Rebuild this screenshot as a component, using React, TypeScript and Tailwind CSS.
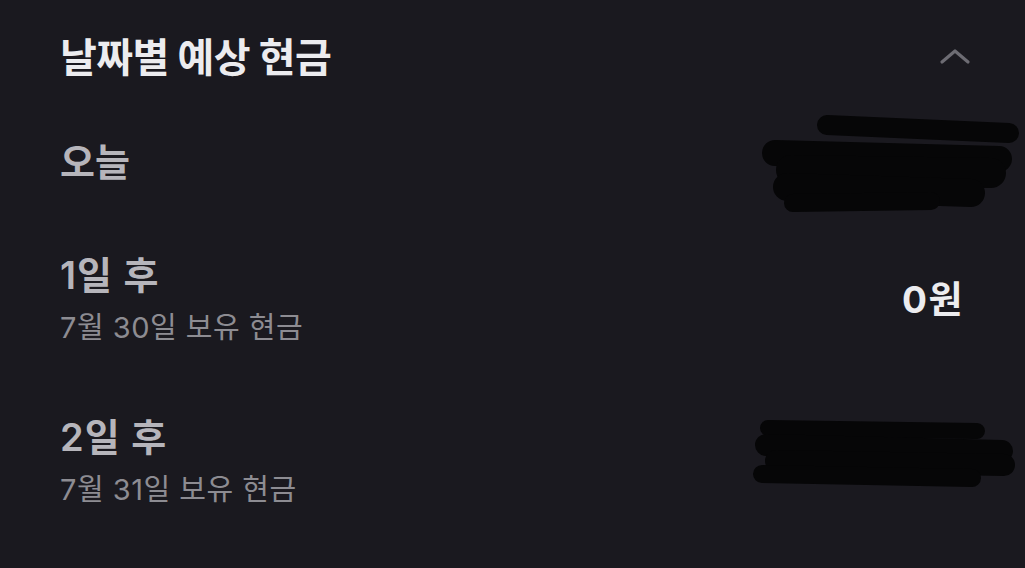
import React from "react";

const font = { fontFamily: '"Noto Sans CJK KR", "Noto Sans", sans-serif' };
const mixed = { fontFamily: 'Inter, "Noto Sans CJK KR", sans-serif' };

function Scribble({ lines, className }: { lines: number[][]; className: string }) {
  return (
    <svg className={className} fill="none" aria-hidden>
      {lines.map(([x1, y1, x2, y2, w], i) => (
        <line
          key={i}
          x1={x1}
          y1={y1}
          x2={x2}
          y2={y2}
          stroke="#060607"
          strokeWidth={w}
          strokeLinecap="round"
        />
      ))}
    </svg>
  );
}

export default function App() {
  return (
    <div style={font} className="w-[1025px] h-[568px] bg-[#1a191f] overflow-hidden pl-[60px] pr-[62px] pt-[31px]">
      <div className="flex items-center justify-between">
        <h2 className="text-[40px] leading-[48px] font-bold text-[#ececef] tracking-[-0.5px]">날짜별 예상 현금</h2>
        <svg width="32" height="20" viewBox="0 0 32 20" className="mr-[-8px] mt-[4px]">
          <path d="M3 15 L16 4 L29 15" stroke="#6d6c73" strokeWidth="3.2" fill="none" strokeLinecap="round" strokeLinejoin="round" />
        </svg>
      </div>

      <div className="relative flex items-center justify-between mt-[59px]">
        <span className="text-[38px] leading-[44px] font-semibold text-[#b6b5bb]">오늘</span>
        <Scribble
          className="absolute right-[-60px] top-[-23px] w-[262px] h-[100px]"
          lines={[
            [66, 10, 248, 18, 20],
            [14, 38, 238, 44, 26],
            [30, 55, 230, 58, 30],
            [26, 72, 210, 78, 28],
            [32, 88, 170, 86, 18],
          ]}
        />
      </div>

      <div className="flex items-center justify-between mt-[71px]">
        <div className="flex flex-col" style={mixed}>
          <span className="text-[38px] leading-[44px] font-semibold text-[#b6b5bb] tracking-[1px]">1일 후</span>
          <span className="mt-[13px] text-[29px] leading-[36px] text-[#8d8c92] tracking-[0.5px]">7월 30일 보유 현금</span>
        </div>
        <span style={mixed} className="text-[37px] leading-[44px] font-bold text-[#ececef] tracking-[1.5px] mr-[-1px]">0원</span>
      </div>

      <div className="relative flex items-center justify-between mt-[69px]">
        <div className="flex flex-col" style={mixed}>
          <span className="text-[38px] leading-[44px] font-semibold text-[#b6b5bb] tracking-[1px]">2일 후</span>
          <span className="mt-[13px] text-[29px] leading-[36px] text-[#8d8c92] tracking-[0.5px]">7월 31일 보유 현금</span>
        </div>
        <Scribble
          className="absolute right-[-57px] top-[0px] w-[268px] h-[80px]"
          lines={[
            [16, 13, 225, 16, 16],
            [14, 30, 250, 36, 22],
            [24, 46, 252, 50, 22],
            [10, 59, 220, 63, 18],
          ]}
        />
      </div>
    </div>
  );
}
